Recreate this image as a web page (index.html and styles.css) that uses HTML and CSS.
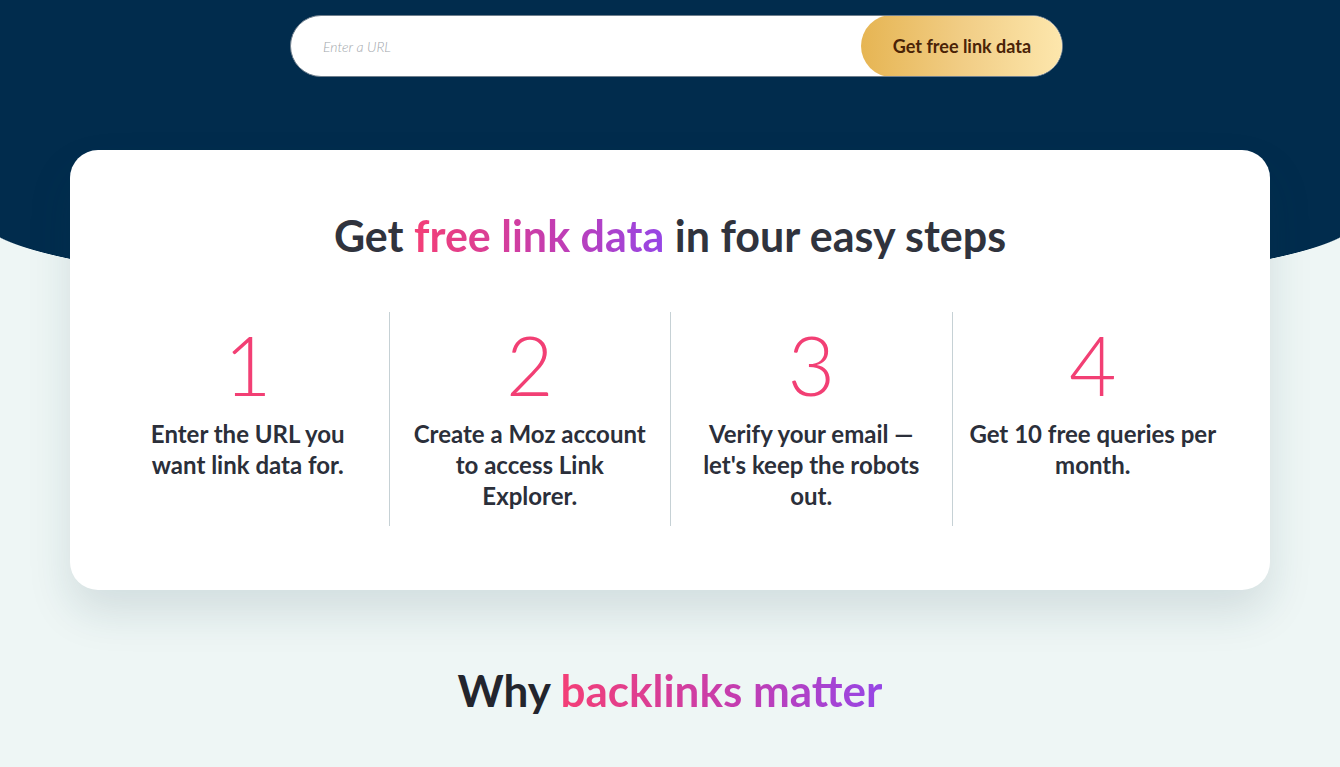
FILE: index.html
```html
<!DOCTYPE html>
<html lang="en">
<head>
<meta charset="utf-8">
<title>Link Explorer</title>
<link rel="stylesheet" href="styles.css">
</head>
<body>
<section class="hero">
  <form class="search">
    <input class="search-input" type="text" placeholder="Enter a URL">
    <button class="search-btn" type="button">Get free link data</button>
  </form>
  <div class="card">
    <h2 class="card-title">Get <span class="grad">free link data</span> in four easy steps</h2>
    <div class="steps">
      <div class="step">
        <div class="step-num">1</div>
        <p class="step-text">Enter the URL you want link data for.</p>
      </div>
      <div class="step">
        <div class="step-num">2</div>
        <p class="step-text">Create a Moz account to access Link<br>Explorer.</p>
      </div>
      <div class="step">
        <div class="step-num">3</div>
        <p class="step-text">Verify your email — let's keep the robots out.</p>
      </div>
      <div class="step">
        <div class="step-num">4</div>
        <p class="step-text">Get 10 free queries per month.</p>
      </div>
    </div>
  </div>
</section>
<section class="why">
  <h2 class="why-title">Why <span class="grad">backlinks matter</span></h2>
</section>
</body>
</html>
```
FILE: styles.css
```css
* { box-sizing: border-box; }
html, body { margin: 0; padding: 0; }
body {
  background: #eef6f5;
  font-family: Lato, "Open Sans", Arial, sans-serif;
  color: #2e313b;
  overflow: hidden;
}
.hero {
  height: 646px;
  padding-top: 15px;
  background-image:
    radial-gradient(688px 80px at 50% 0, #012c4d 99.6%, rgba(1,44,77,0) 100%),
    linear-gradient(#012c4d, #012c4d);
  background-size: 100% 80px, 100% 220px;
  background-position: 0 220px, 0 0;
  background-repeat: no-repeat;
}
.search {
  display: flex;
  width: 773px;
  height: 62px;
  margin: 0 0 0 calc(50% - 380px);
  background: #fff;
  border: 1px solid #6f7f8d;
  border-radius: 31px;
  overflow: hidden;
}
.search-input {
  flex: 1;
  border: 0;
  outline: 0;
  background: transparent;
  padding: 0 0 0 32px;
  font-family: Lato, sans-serif;
  font-style: italic;
  font-weight: 300;
  font-size: 14px;
  color: #333;
}
.search-input::placeholder { color: #a3a8ad; }
.search-btn {
  width: 202px;
  margin: -1px -1px -1px 0;
  border: 0;
  border-radius: 31px;
  background: linear-gradient(90deg, #e6b553 0%, #f1cd85 50%, #fde7ad 100%);
  font-family: Lato, sans-serif;
  font-weight: 700;
  font-size: 18px;
  color: #4a2307;
  cursor: pointer;
}
.card {
  width: 1200px;
  height: 440px;
  margin: 73px auto 0;
  padding: 60px 37px 0;
  background: #fff;
  border-radius: 28px;
  box-shadow: 0 22px 44px rgba(20, 60, 80, 0.13);
}
.card-title {
  margin: 0;
  text-align: center;
  font-size: 43px;
  line-height: 52px;
  font-weight: 700;
  color: #30333d;
}
.grad {
  background: linear-gradient(90deg, #f43f76 0%, #c43db0 55%, #9646e6 100%);
  -webkit-background-clip: text;
  background-clip: text;
  color: transparent;
}
.steps {
  display: grid;
  grid-template-columns: repeat(4, 1fr);
  margin-top: 50px;
}
.step {
  height: 214px;
  padding: 11px 15.5px 0;
  text-align: center;
}
.step + .step { border-left: 1px solid #c6d1d5; }
.step-num {
  font-size: 82px;
  line-height: 82px;
  font-weight: 300;
  color: #f23f74;
}
.step-text {
  margin: 13px 0 0;
  font-size: 24px;
  line-height: 31px;
  font-weight: 700;
  color: #2b2f3a;
}
.why {
  padding-top: 18px;
  text-align: center;
}
.why-title {
  margin: 0;
  font-size: 44px;
  line-height: 53px;
  font-weight: 700;
  color: #23252d;
}
```
